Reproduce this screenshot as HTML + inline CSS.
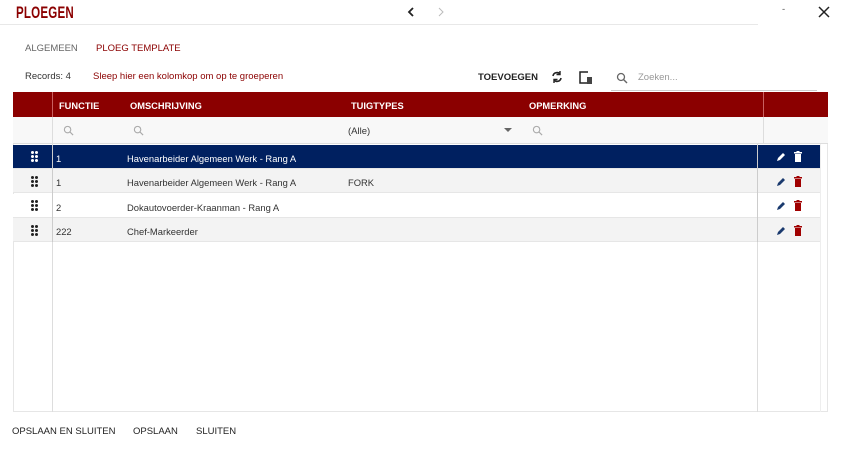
<!DOCTYPE html>
<html><head><meta charset="utf-8"><style>
*{box-sizing:border-box;margin:0;padding:0}
body{width:841px;height:450px;background:#fff;font-family:"Liberation Sans",sans-serif;position:relative;overflow:hidden;color:#333}
.a{position:absolute}
.t{font-size:9.5px;white-space:nowrap}
.hd{color:#fff;font-weight:bold;font-size:9.3px}
.row{position:absolute;left:13px;width:807px;height:24px;border-bottom:1px solid #e6e6e6;font-size:9.4px}
.row span{position:absolute;top:8px;white-space:nowrap}
</style></head><body>
<div class="a" style="left:16px;top:3px;font-size:17px;font-weight:bold;color:#8b0000;transform:scaleX(.68);transform-origin:left;letter-spacing:.3px">PLOEGEN</div>
<svg class="a" style="left:405px;top:6px" width="12" height="12" viewBox="0 0 12 12"><path d="M8 2L4 6l4 4" stroke="#222" stroke-width="1.8" fill="none"/></svg>
<svg class="a" style="left:435px;top:6px" width="12" height="12" viewBox="0 0 12 12"><path d="M4 2l4 4-4 4" stroke="#bbb" stroke-width="1" fill="none"/></svg>
<div class="a t" style="left:782px;top:4px;color:#555">-</div>
<svg class="a" style="left:818px;top:6px" width="12" height="12" viewBox="0 0 12 12"><path d="M1 1l10 10M11 1L1 11" stroke="#222" stroke-width="1.5"/></svg>
<div class="a" style="left:0;top:24px;width:758px;height:1px;background:#e8e8e8"></div>
<div class="a t" style="left:25px;top:43px;color:#666">ALGEMEEN</div>
<div class="a t" style="left:96px;top:43px;color:#8b0000">PLOEG TEMPLATE</div>
<div class="a t" style="left:25px;top:71px;color:#333">Records: 4</div>
<div class="a t" style="left:93px;top:71px;color:#8b0000">Sleep hier een kolomkop om op te groeperen</div>
<div class="a t" style="left:478px;top:72px;color:#222;font-weight:bold">TOEVOEGEN</div>
<svg class="a" style="left:550px;top:70px" width="14" height="14" viewBox="0 0 14 14"><path d="M3 6a4 4 0 0 1 7-2M11 8a4 4 0 0 1-7 2" stroke="#222" stroke-width="1.6" fill="none"/><path d="M10 1v3.5H6.5M4 13V9.5h3.5" stroke="#222" stroke-width="1.4" fill="none"/></svg>
<svg class="a" style="left:578px;top:70px" width="16" height="15" viewBox="0 0 16 15"><path d="M10 2H2v11h7" stroke="#222" stroke-width="1.5" fill="none"/><rect x="9" y="7" width="5" height="7" fill="#444"/></svg>
<svg class="a" style="left:616px;top:72px" width="12" height="12" viewBox="0 0 12 12"><circle cx="5" cy="5" r="3.5" stroke="#666" stroke-width="1.3" fill="none"/><path d="M7.5 7.5L11 11" stroke="#666" stroke-width="1.4"/></svg>
<div class="a t" style="left:638px;top:72px;color:#999">Zoeken...</div>
<div class="a" style="left:611px;top:90px;width:206px;height:1px;background:#ccc"></div>
<div class="a" style="left:13px;top:92px;width:815px;height:320px;border:1px solid #e6e6e6"></div>
<div class="a" style="left:13px;top:92px;width:815px;height:25px;background:#8b0000"></div>
<div class="a" style="left:52px;top:92px;width:1px;height:25px;background:#c96060"></div>
<div class="a" style="left:763px;top:92px;width:1px;height:25px;background:#c96060"></div>
<div class="a hd" style="left:59px;top:101px">FUNCTIE</div>
<div class="a hd" style="left:130px;top:101px">OMSCHRIJVING</div>
<div class="a hd" style="left:351px;top:101px">TUIGTYPES</div>
<div class="a hd" style="left:529px;top:101px">OPMERKING</div>
<div class="a" style="left:13px;top:117px;width:815px;height:27px;background:#f8f8f8;border-bottom:1px solid #ddd"></div>
<svg class="a" style="left:63px;top:125px" width="11" height="11" viewBox="0 0 12 12"><circle cx="5" cy="5" r="3.5" stroke="#aaa" stroke-width="1.2" fill="none"/><path d="M7.5 7.5L11 11" stroke="#aaa" stroke-width="1.3"/></svg>
<svg class="a" style="left:133px;top:125px" width="11" height="11" viewBox="0 0 12 12"><circle cx="5" cy="5" r="3.5" stroke="#aaa" stroke-width="1.2" fill="none"/><path d="M7.5 7.5L11 11" stroke="#aaa" stroke-width="1.3"/></svg>
<div class="a t" style="left:348px;top:126px;color:#333">(Alle)</div>
<svg class="a" style="left:504px;top:128px" width="8" height="5"><path d="M0 0h8L4 4z" fill="#666"/></svg>
<svg class="a" style="left:532px;top:125px" width="11" height="11" viewBox="0 0 12 12"><circle cx="5" cy="5" r="3.5" stroke="#aaa" stroke-width="1.2" fill="none"/><path d="M7.5 7.5L11 11" stroke="#aaa" stroke-width="1.3"/></svg>
<div class="a" style="left:52px;top:117px;width:1px;height:295px;background:#ddd"></div>
<div class="a" style="left:763px;top:117px;width:1px;height:27px;background:#ddd"></div>
<div class="a" style="left:757px;top:144px;width:1px;height:268px;background:#ddd"></div>
<div class="a" style="left:820px;top:144px;width:1px;height:268px;background:#eee"></div>

<div class="row" style="top:145px;background:#002060;color:#fff"><span style="left:43px">1</span><span style="left:114px">Havenarbeider Algemeen Werk - Rang A</span></div>
<div class="row" style="top:169px;background:#f3f3f3"><span style="left:43px">1</span><span style="left:114px">Havenarbeider Algemeen Werk - Rang A</span><span style="left:335px">FORK</span></div>
<div class="row" style="top:194px;background:#fff"><span style="left:43px">2</span><span style="left:114px">Dokautovoerder-Kraanman - Rang A</span></div>
<div class="row" style="top:218px;background:#f3f3f3"><span style="left:43px">222</span><span style="left:114px">Chef-Markeerder</span></div>
<div class="a" style="left:52px;top:145px;width:1px;height:97px;background:#ccc"></div>
<div class="a" style="left:757px;top:145px;width:1px;height:97px;background:#ccc"></div>

<svg class="a" style="left:31px;top:151px" width="8" height="11"><g fill="#fff"><circle cx="1.5" cy="1.5" r="1.5"/><circle cx="5.5" cy="1.5" r="1.5"/><circle cx="1.5" cy="5.5" r="1.5"/><circle cx="5.5" cy="5.5" r="1.5"/><circle cx="1.5" cy="9.5" r="1.5"/><circle cx="5.5" cy="9.5" r="1.5"/></g></svg>
<svg class="a" style="left:31px;top:176px" width="8" height="11"><g fill="#222"><circle cx="1.5" cy="1.5" r="1.5"/><circle cx="5.5" cy="1.5" r="1.5"/><circle cx="1.5" cy="5.5" r="1.5"/><circle cx="5.5" cy="5.5" r="1.5"/><circle cx="1.5" cy="9.5" r="1.5"/><circle cx="5.5" cy="9.5" r="1.5"/></g></svg>
<svg class="a" style="left:31px;top:200px" width="8" height="11"><g fill="#222"><circle cx="1.5" cy="1.5" r="1.5"/><circle cx="5.5" cy="1.5" r="1.5"/><circle cx="1.5" cy="5.5" r="1.5"/><circle cx="5.5" cy="5.5" r="1.5"/><circle cx="1.5" cy="9.5" r="1.5"/><circle cx="5.5" cy="9.5" r="1.5"/></g></svg>
<svg class="a" style="left:31px;top:225px" width="8" height="11"><g fill="#222"><circle cx="1.5" cy="1.5" r="1.5"/><circle cx="5.5" cy="1.5" r="1.5"/><circle cx="1.5" cy="5.5" r="1.5"/><circle cx="5.5" cy="5.5" r="1.5"/><circle cx="1.5" cy="9.5" r="1.5"/><circle cx="5.5" cy="9.5" r="1.5"/></g></svg>

<svg class="a" style="left:776px;top:152px" width="10" height="10" viewBox="0 0 10 10"><path d="M1 9l1-3 5-5 2 2-5 5z" fill="#fff"/></svg>
<svg class="a" style="left:794px;top:151px" width="8" height="11" viewBox="0 0 8 11"><path d="M0 1h8v1.5H0zM2.5 0h3v1H2.5zM1 3h6v8H1z" fill="#fff"/></svg>
<svg class="a" style="left:776px;top:177px" width="10" height="10" viewBox="0 0 10 10"><path d="M1 9l1-3 5-5 2 2-5 5z" fill="#1a3a6e"/></svg>
<svg class="a" style="left:794px;top:176px" width="8" height="11" viewBox="0 0 8 11"><path d="M0 1h8v1.5H0zM2.5 0h3v1H2.5zM1 3h6v8H1z" fill="#a00000"/></svg>
<svg class="a" style="left:776px;top:201px" width="10" height="10" viewBox="0 0 10 10"><path d="M1 9l1-3 5-5 2 2-5 5z" fill="#1a3a6e"/></svg>
<svg class="a" style="left:794px;top:200px" width="8" height="11" viewBox="0 0 8 11"><path d="M0 1h8v1.5H0zM2.5 0h3v1H2.5zM1 3h6v8H1z" fill="#a00000"/></svg>
<svg class="a" style="left:776px;top:226px" width="10" height="10" viewBox="0 0 10 10"><path d="M1 9l1-3 5-5 2 2-5 5z" fill="#1a3a6e"/></svg>
<svg class="a" style="left:794px;top:225px" width="8" height="11" viewBox="0 0 8 11"><path d="M0 1h8v1.5H0zM2.5 0h3v1H2.5zM1 3h6v8H1z" fill="#a00000"/></svg>

<div class="a t" style="left:12px;top:426px;color:#222">OPSLAAN EN SLUITEN</div>
<div class="a t" style="left:133px;top:426px;color:#222">OPSLAAN</div>
<div class="a t" style="left:196px;top:426px;color:#222">SLUITEN</div>
</body></html>
